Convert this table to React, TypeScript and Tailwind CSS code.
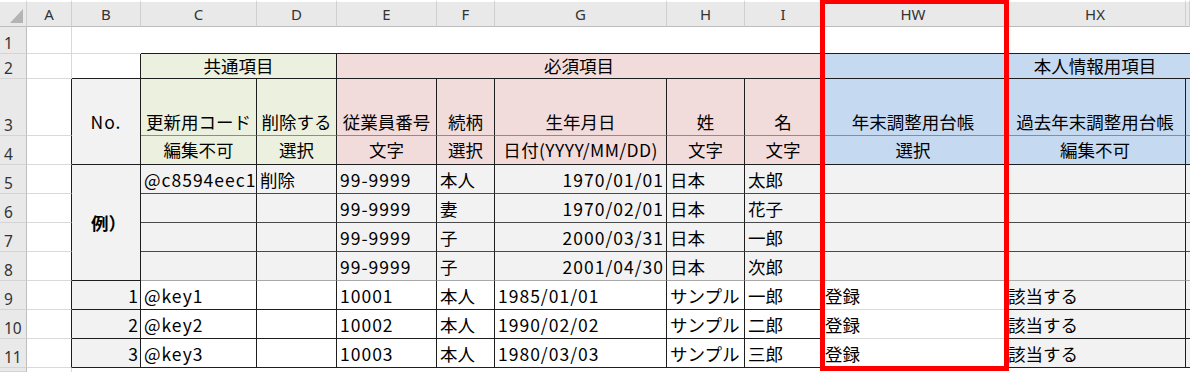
import React from "react";

type P = { children?: React.ReactNode; className?: string };

function Cell({ children, className = "" }: P) {
  return (
    <div className={`flex overflow-hidden whitespace-nowrap ${className}`}>
      {children}
    </div>
  );
}

const T = "items-end leading-[20px] pb-[3px] px-[3px] text-[17.5px] text-black";
const TL = "items-end leading-[20px] pb-[3px] px-[3px] text-[17.5px] text-black tracking-[1px]";
const TRL = "items-end justify-end leading-[20px] pb-[3px] pl-[3px] pr-[2px] text-[17.5px] text-black tracking-[1px]";
const TC = "items-end justify-center leading-[20px] pb-[3px] px-[2px] text-[17.5px] text-black";
const TR = "items-end justify-end leading-[20px] pb-[3px] px-[3px] text-[17.5px] text-black";
const TM = "items-center justify-center leading-[20px] px-[1px] text-[17.5px] text-black";

const BR = "border-r border-r-[#1e1e1e]";
const BB = "border-b border-b-[#1e1e1e]";
const BBM = "border-b border-b-[#8c8c8c]";
const BBE = "border-b border-b-[#4a4a4a]";
const BBL = "border-b border-b-[#a8a8a8]";
const LR = "border-r border-r-[#d9d9d9]";
const LB = "border-b border-b-[#d9d9d9]";

const GREEN = "bg-[#ebf1de]";
const PINK = "bg-[#f2dcdb]";
const BLUE = "bg-[#c5d9f1]";
const GRAY = "bg-[#f2f2f2]";
const WHITE = "bg-white";

const COLH =
  "items-center justify-center bg-[#e9e9e9] border-t-[2px] border-t-white border-r border-r-[#cfcfcf] border-b border-b-[#bdbdbd] text-[15px] leading-[18px] text-[#333] [font-family:'Noto_Sans',sans-serif]";

function RowHead({ n }: { n: string }) {
  return (
    <Cell className="items-end pl-[4px] pb-[1px] bg-[#e9e9e9] border-r border-r-[#bdbdbd] border-b border-b-[#d4d4d4] text-[15.5px] leading-[18px] text-[#333] [font-family:'Noto_Sans',sans-serif]">
      {n}
    </Cell>
  );
}

const examples = [
  ["@c8594eec1d2f", "削除", "99-9999", "本人", "1970/01/01", "日本", "太郎"],
  ["", "", "99-9999", "妻", "1970/02/01", "日本", "花子"],
  ["", "", "99-9999", "子", "2000/03/31", "日本", "一郎"],
  ["", "", "99-9999", "子", "2001/04/30", "日本", "次郎"],
];

const data = [
  ["1", "@key1", "", "10001", "本人", "1985/01/01", "サンプル", "一郎", "登録", "該当する"],
  ["2", "@key2", "", "10002", "本人", "1990/02/02", "サンプル", "二郎", "登録", "該当する"],
  ["3", "@key3", "", "10003", "本人", "1980/03/03", "サンプル", "三郎", "登録", "該当する"],
];

export default function App() {
  return (
    <div className="relative w-[1190px] h-[372px] overflow-hidden bg-white [font-family:'Noto_Sans_CJK_JP','Noto_Sans',sans-serif]">
      <div className="grid grid-cols-[27px_45px_69px_116px_80px_100px_58px_172px_78px_77px_183px_181px_4px] grid-rows-[27px_27px_25px_57px_29px_29px_29px_29px_29px_29px_29px_29px_4px]">
        {/* column headers */}
        <Cell className="bg-[#e9e9e9] border-t-[2px] border-t-white border-r border-r-[#cfcfcf] border-b border-b-[#bdbdbd]">
          <svg width="26" height="24" viewBox="0 0 26 24">
            <polygon points="10,21 23,7 23,21" fill="#b4b4b4" />
          </svg>
        </Cell>
        {["A", "B", "C", "D", "E", "F", "G", "H", "I", "HW", "HX", ""].map((l, i) => (
          <Cell key={i} className={COLH}>
            {l}
          </Cell>
        ))}

        {/* row 1 */}
        <RowHead n="1" />
        <Cell className={`${WHITE} ${LR} ${LB}`} />
        <Cell className={`${WHITE} ${LB}`} />
        <Cell className={`${WHITE} ${BB}`} />
        <Cell className={`${WHITE} ${BB}`} />
        <Cell className={`${WHITE} ${BB}`} />
        <Cell className={`${WHITE} ${BB}`} />
        <Cell className={`${WHITE} ${BB}`} />
        <Cell className={`${WHITE} ${BB}`} />
        <Cell className={`${WHITE} ${BB}`} />
        <Cell className={`${WHITE} ${BB}`} />
        <Cell className={`${WHITE} ${BB}`} />
        <Cell className={`${WHITE} ${BB}`} />

        {/* row 2 */}
        <RowHead n="2" />
        <Cell className={`${WHITE} ${LR} ${LB}`} />
        <Cell className={`${WHITE} ${BR} ${BB}`} />
        <Cell className={`col-span-2 ${GREEN} ${BR} ${BB} ${TM}`}>共通項目</Cell>
        <Cell className={`col-span-5 ${PINK} ${BR} ${BB} ${TM}`}>必須項目</Cell>
        <Cell className={`${BLUE} ${BB}`} />
        <Cell className={`col-span-2 ${BLUE} ${BB} ${TM} pr-[6px]`}>本人情報用項目</Cell>

        {/* row 3 */}
        <RowHead n="3" />
        <Cell className={`${WHITE} ${BR} ${LB}`} />
        <Cell className={`row-span-2 ${GRAY} ${BR} ${BB} ${TM} tracking-[1px]`}>No.</Cell>
        <Cell className={`${GREEN} ${BR} ${BBM} ${TC}`}>更新用コード</Cell>
        <Cell className={`${GREEN} ${BR} ${BBM} ${TC}`}>削除する</Cell>
        <Cell className={`${PINK} ${BR} ${BBM} ${TC}`}>従業員番号</Cell>
        <Cell className={`${PINK} ${BR} ${BBM} ${TC}`}>続柄</Cell>
        <Cell className={`${PINK} ${BR} ${BBM} ${TC}`}>生年月日</Cell>
        <Cell className={`${PINK} ${BR} ${BBM} ${TC}`}>姓</Cell>
        <Cell className={`${PINK} ${BR} ${BBM} ${TC}`}>名</Cell>
        <Cell className={`${BLUE} ${BR} ${BBM} ${TC}`}>年末調整用台帳</Cell>
        <Cell className={`${BLUE} ${BR} ${BBM} ${TC}`}>過去年末調整用台帳</Cell>
        <Cell className={`${BLUE} ${BBM}`} />

        {/* row 4 */}
        <RowHead n="4" />
        <Cell className={`${WHITE} ${BR} ${LB}`} />
        <Cell className={`${GREEN} ${BR} ${BB} ${TM}`}>編集不可</Cell>
        <Cell className={`${GREEN} ${BR} ${BB} ${TM}`}>選択</Cell>
        <Cell className={`${PINK} ${BR} ${BB} ${TM}`}>文字</Cell>
        <Cell className={`${PINK} ${BR} ${BB} ${TM}`}>選択</Cell>
        <Cell className={`${PINK} ${BR} ${BB} ${TM} tracking-[0.4px]`}>日付(YYYY/MM/DD)</Cell>
        <Cell className={`${PINK} ${BR} ${BB} ${TM}`}>文字</Cell>
        <Cell className={`${PINK} ${BR} ${BB} ${TM}`}>文字</Cell>
        <Cell className={`${BLUE} ${BR} ${BB} ${TM}`}>選択</Cell>
        <Cell className={`${BLUE} ${BR} ${BB} ${TM}`}>編集不可</Cell>
        <Cell className={`${BLUE} ${BB}`} />

        {/* rows 5-8 examples */}
        {examples.map((r, i) => {
          const bb = i === 3 ? BBL : BBE;
          return (
            <React.Fragment key={`e${i}`}>
              <RowHead n={String(5 + i)} />
              <Cell className={`${WHITE} ${BR} ${LB}`} />
              {i === 0 && (
                <Cell className={`row-span-4 ${GRAY} ${BR} ${BB} ${TM} font-bold pl-[6px]`}>例）</Cell>
              )}
              <Cell className={`${GRAY} ${BR} ${bb} ${TL}`}>{r[0]}</Cell>
              <Cell className={`${GRAY} ${BR} ${bb} ${T} px-[1px]`}>{r[1]}</Cell>
              <Cell className={`${GRAY} ${BR} ${bb} ${TL}`}>{r[2]}</Cell>
              <Cell className={`${GRAY} ${BR} ${bb} ${T}`}>{r[3]}</Cell>
              <Cell className={`${GRAY} ${BR} ${bb} ${TRL}`}>{r[4]}</Cell>
              <Cell className={`${GRAY} ${BR} ${bb} ${T}`}>{r[5]}</Cell>
              <Cell className={`${GRAY} ${BR} ${bb} ${T}`}>{r[6]}</Cell>
              <Cell className={`${GRAY} ${BR} ${bb}`} />
              <Cell className={`${GRAY} ${BR} ${bb}`} />
              <Cell className={`${GRAY} ${bb}`} />
            </React.Fragment>
          );
        })}

        {/* rows 9-11 data */}
        {data.map((r, i) => (
          <React.Fragment key={`d${i}`}>
            <RowHead n={String(9 + i)} />
            <Cell className={`${WHITE} ${BR} ${LB}`} />
            <Cell className={`${GRAY} ${BR} ${BB} ${TR} pr-[2px]`}>{r[0]}</Cell>
            <Cell className={`${WHITE} ${BR} ${BB} ${TL}`}>{r[1]}</Cell>
            <Cell className={`${WHITE} ${BR} ${BB} ${T}`}>{r[2]}</Cell>
            <Cell className={`${WHITE} ${BR} ${BB} ${TL}`}>{r[3]}</Cell>
            <Cell className={`${WHITE} ${BR} ${BB} ${T}`}>{r[4]}</Cell>
            <Cell className={`${WHITE} ${BR} ${BB} ${TL}`}>{r[5]}</Cell>
            <Cell className={`${WHITE} ${BR} ${BB} ${T} px-[1px]`}>{r[6]}</Cell>
            <Cell className={`${WHITE} ${BR} ${BB} ${T}`}>{r[7]}</Cell>
            <Cell className={`${WHITE} ${BR} ${LB} ${T}`}>{r[8]}</Cell>
            <Cell className={`${GRAY} ${BR} ${BB} ${T}`}>{r[9]}</Cell>
            <Cell className={`${GRAY} ${BB}`} />
          </React.Fragment>
        ))}

        {/* partial row 12 */}
        <RowHead n="" />
        <Cell className={`${WHITE} ${LR}`} />
        <Cell className={`${WHITE} col-span-11`} />
      </div>

      {/* red highlight frame */}
      <div className="absolute left-[820px] top-[-1px] w-[189px] h-[372px] border-[5px] border-[#ff0000] pointer-events-none" />
    </div>
  );
}
